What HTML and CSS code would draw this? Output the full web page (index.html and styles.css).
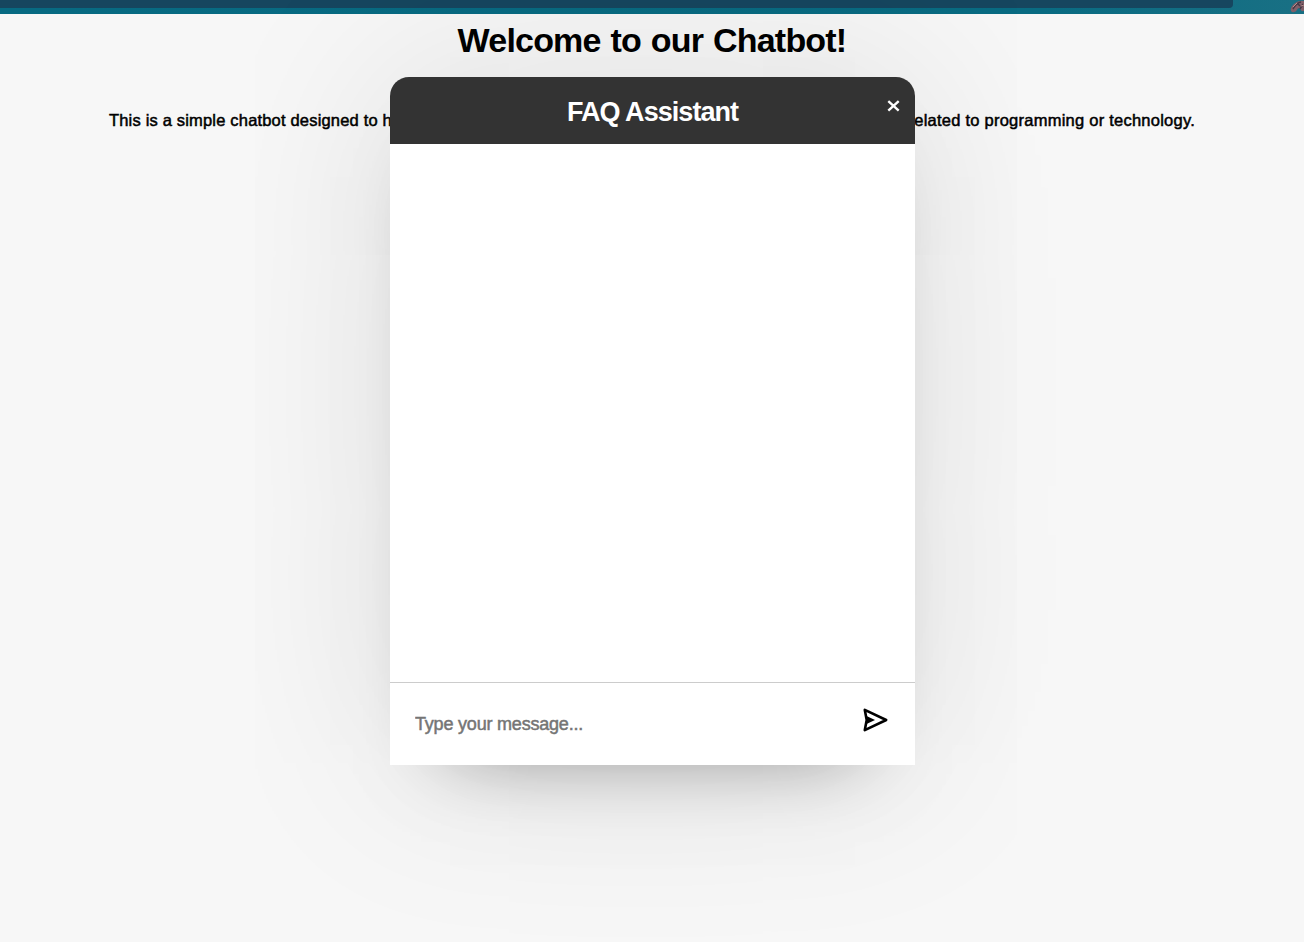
FILE: index.html
```html
<!DOCTYPE html>
<html lang="en">
<head>
    <meta charset="UTF-8">
    <meta name="viewport" content="width=device-width, initial-scale=1.0">
    <title>Chatbot</title>
    <link rel="stylesheet" href="styles.css">
</head>
<body>
    <div class="top-strip">
        <div class="strip-tab"></div>
        <svg class="strip-art" width="15" height="14" viewBox="0 0 15 14">
            <path d="M15 1C9 0 4 4 2 8c-1 3 1 5 3 4 3 0 3-4 5-4s1 4 5 3" fill="#805f69"/>
            <path d="M12 2C7 3 6 6 4 9M9 4l2 2M14 4l-3 5" fill="none" stroke="#443845" stroke-width="1.5"/>
            <path d="M4 7l4-4M12 6l3-1" fill="none" stroke="#b78d8c"/>
        </svg>
    </div>

    <h1>Welcome to our Chatbot!</h1>
    <p class="intro">
        <span class="intro-start">This is a simple chatbot designed to help answer your</span>
        <span class="intro-end">questions related to programming or technology.</span>
    </p>

    <div class="chatbot">
        <header>
            <h2>FAQ Assistant</h2>
            <button class="close-btn" aria-label="Close">
                <svg width="13" height="12" viewBox="0 0 13 12">
                    <path d="M1.3 1.2l10.4 9.4M11.7 1.2l-10.4 9.4" fill="none" stroke="#fff" stroke-width="2.4"/>
                </svg>
            </button>
        </header>
        <div class="chatbox"></div>
        <div class="chat-input">
            <textarea placeholder="Type your message..."></textarea>
            <button class="send-btn" aria-label="Send">
                <svg width="26" height="24" viewBox="0 0 26 24">
                    <path d="M1.8 1.9L23.2 12 1.8 22.1 3.7 12z" fill="none" stroke="#000" stroke-width="2.6" stroke-linejoin="round"/>
                    <path d="M3.5 8l8.5 4-8.5 4z"/>
                </svg>
            </button>
        </div>
    </div>
</body>
</html>
```

FILE: styles.css
```css
* {
    margin: 0;
    padding: 0;
    box-sizing: border-box;
    font-family: 'Franklin Gothic Medium', 'Liberation Sans', Arial, sans-serif;
}

body {
    background: #f7f7f7;
    height: 942px;
    overflow: hidden;
}

.top-strip {
    display: flex;
    justify-content: space-between;
    height: 14px;
    background: linear-gradient(90deg, #076a82 0%, #096b82 80%, #197084 100%);
}

.strip-tab {
    width: 1233px;
    height: 8px;
    background: #16465f;
    border-bottom-right-radius: 4px;
}

h1 {
    height: 53px;
    line-height: 53px;
    font-size: 34px;
    letter-spacing: -0.8px;
    word-spacing: 1.2px;
    text-align: center;
    white-space: nowrap;
}

.intro {
    display: flex;
    justify-content: space-between;
    width: 1086px;
    margin: 43px auto 0;
    height: 20px;
    line-height: 20px;
    font-size: 16.5px;
    letter-spacing: 0.18px;
    white-space: nowrap;
    -webkit-text-stroke: 0.5px #000;
}

.intro-end {
    letter-spacing: 0.24px;
}

.chatbot {
    position: absolute;
    left: 390px;
    top: 77px;
    width: 525px;
    height: 688px;
    display: flex;
    flex-direction: column;
    background: #fff;
    border-radius: 19px 19px 0 0;
    box-shadow: 0 0 200px 0 rgba(0, 0, 0, 0.11),
                0 40px 80px -60px rgba(0, 0, 0, 0.5);
}

header {
    position: relative;
    height: 67px;
    background: #333;
    color: #fff;
    text-align: center;
    border-radius: 19px 19px 0 0;
}

h2 {
    line-height: 71px;
    font-size: 27px;
    letter-spacing: -0.95px;
    white-space: nowrap;
}

button {
    border: none;
    background: none;
    cursor: pointer;
}

button svg {
    display: block;
}

.close-btn {
    position: absolute;
    right: 15px;
    top: 23px;
}

.chatbox {
    flex: 1;
}

.chat-input {
    display: flex;
    height: 83px;
    padding: 0 26px 0 25px;
    border-top: 1px solid #ccc;
}

textarea {
    flex: 1;
    height: 75px;
    margin-top: 5px;
    padding-top: 24px;
    border: none;
    outline: none;
    resize: none;
    background: transparent;
    font-size: 18px;
    line-height: 24px;
    letter-spacing: -0.2px;
}

textarea::placeholder {
    color: #757575;
    -webkit-text-stroke: 0.5px #757575;
}

.send-btn {
    align-self: flex-start;
    margin-top: 25px;
}
```
